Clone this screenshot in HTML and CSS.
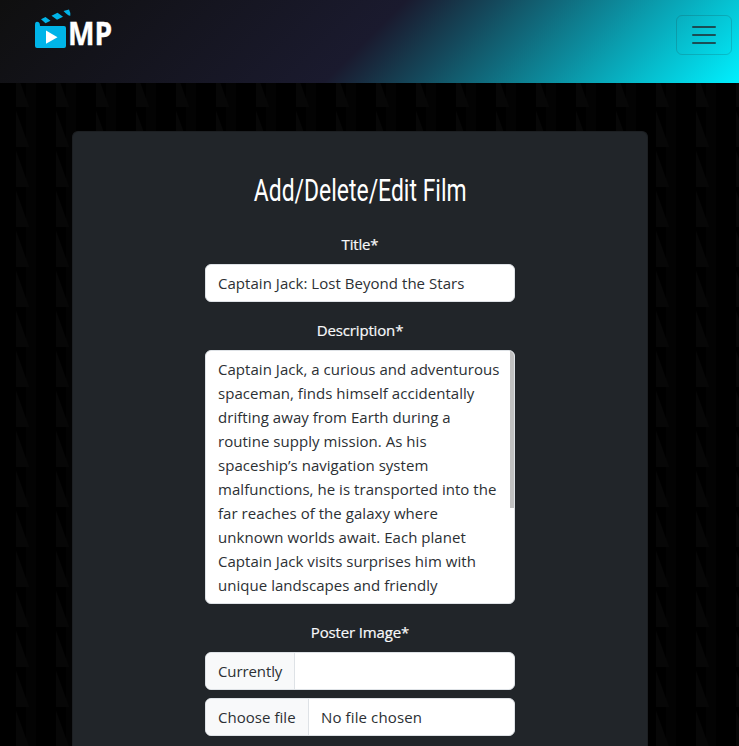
FILE: index.html
```html
<!DOCTYPE html>
<html lang="en">
<head>
<meta charset="utf-8">
<title>Add/Delete/Edit Film</title>
<link rel="stylesheet" href="styles.css">
</head>
<body>
<nav class="navbar">
  <a class="brand" href="#" aria-label="MP">
    <svg class="clapper" width="34" height="40" viewBox="0 0 34 40">
      <g fill="#00b4e8">
        <path d="M0 15Q0 11.800 2 11.800Q5 11.800 5 16H29Q31 16 31 18V36Q31 38 29 38H2Q0 38 0 36Z"/>
        <path d="M6 9.200L10.500 7L15.500 10.800L10.500 13.300Z"/>
        <path d="M16.500 5.800L22.500 2.700L28 6.700L22 9.700Z"/>
        <path d="M28.500 1.100L34 -.5Q36 3.500 35.300 5.800Q33 6 28.500 1.100Z"/>
      </g>
      <path d="M11 20.500V33.800L22.500 27.200Z" fill="#fff"/>
    </svg>
    <span class="brand-name">MP</span>
  </a>
  <button class="toggler" aria-label="Toggle navigation">
    <svg width="30" height="30" viewBox="0 0 30 30"><path d="M4 7h22M4 15h22M4 23h22" stroke="#212529" stroke-opacity=".75" stroke-width="2" stroke-linecap="round"/></svg>
  </button>
</nav>
<main class="card">
  <h2 class="heading"><span>Add/Delete/Edit Film</span></h2>
  <form class="form">
    <div class="field">
      <div class="label">Title*</div>
      <div class="control">Captain Jack: Lost Beyond the Stars</div>
    </div>
    <div class="field">
      <div class="label">Description*</div>
      <div class="control area">Captain Jack, a curious and adventurous<br>spaceman, finds himself accidentally<br>drifting away from Earth during a<br>routine supply mission. As his<br>spaceship’s navigation system<br>malfunctions, he is transported into the<br>far reaches of the galaxy where<br>unknown worlds await. Each planet<br>Captain Jack visits surprises him with<br>unique landscapes and friendly<i class="thumb"></i></div>
    </div>
    <div class="field">
      <div class="label">Poster Image*</div>
      <div class="control group"><span class="addon current">Currently</span></div>
      <div class="control group"><span class="addon choose">Choose file</span><span class="value">No file chosen</span></div>
    </div>
  </form>
</main>
</body>
</html>
```
FILE: styles.css
```css
* { box-sizing: border-box; }
html { height: 100%; overflow: hidden; background: #000; }
body {
  margin: 0;
  height: 100%;
  display: flex;
  flex-direction: column;
  overflow: hidden;
  color: #f8f9fa;
  font: 15px/24px "Open Sans", sans-serif;
  background: #000 url("data:image/svg+xml,%3Csvg xmlns='http://www.w3.org/2000/svg' width='40' height='40'%3E%3Cpath d='M26 0h10v40H26z' fill='%23030303'/%3E%3Cpath d='M16 4v36h13z' fill='%23070707'/%3E%3C/svg%3E") 0 27px;
}
.navbar {
  flex: none;
  height: 83px;
  display: flex;
  justify-content: space-between;
  align-items: flex-start;
  padding: 10px 7px 0 35px;
  background: linear-gradient(135deg, #0f0f0f 0%, #1a1a2e 49.5%, #00f0ff 100%);
}
.brand { display: flex; color: #fff; text-decoration: none; }
.clapper { display: block; overflow: visible; }
.brand-name {
  font: 700 32px/48px "Open Sans", sans-serif;
  height: 48px;
  transform: scaleX(.88);
  transform-origin: left;
  margin: -1px 0 0 -1px;
  -webkit-text-stroke: .4px #fff;
}
.toggler {
  width: 56px;
  height: 40px;
  margin-top: 5px;
  padding: 4px 12px;
  border: 1px solid rgba(33, 37, 41, .18);
  border-radius: 6px;
  background: transparent;
}
.toggler svg { display: block; }
.card {
  flex: 1;
  min-height: 0;
  width: 576px;
  margin: 48px 0 0 72px;
  padding: 40px 132px 0;
  border: 1px solid #1c1f22;
  border-bottom: 0;
  border-radius: 6px 6px 0 0;
  background: #212529;
}
.heading {
  display: flex;
  justify-content: center;
  margin: 0;
  height: 38px;
  font: 400 31.5px/38px Roboto, sans-serif;
  color: #fff;
  white-space: nowrap;
}
.heading span { transform: scaleX(.728); }
.form { padding-top: 22px; }
.field { margin-bottom: 16px; }
.field:last-child { margin-bottom: 0; }
.label { height: 24px; margin-bottom: 8px; text-align: center; letter-spacing: -.15px; -webkit-text-stroke: .2px #f8f9fa; }
.control {
  height: 38px;
  padding: 6px 12px;
  border: 1px solid #dee2e6;
  border-radius: 6px;
  background: #fff;
  color: #2c3034;
  letter-spacing: .04px;
  white-space: nowrap;
  overflow: hidden;
}
.area { position: relative; height: 254px; }
.thumb { position: absolute; top: 0; right: 0; width: 4px; height: 157px; background: #c1c1c1; }
.group { display: flex; padding: 0; margin-bottom: 8px; }
.addon { padding: 6px 0 6px 12px; background: #f8f9fa; border-right: 1px solid #dee2e6; }
.current { width: 89px; letter-spacing: -.1px; }
.choose { width: 103px; }
.value { padding: 6px 12px; letter-spacing: .12px; }
```
